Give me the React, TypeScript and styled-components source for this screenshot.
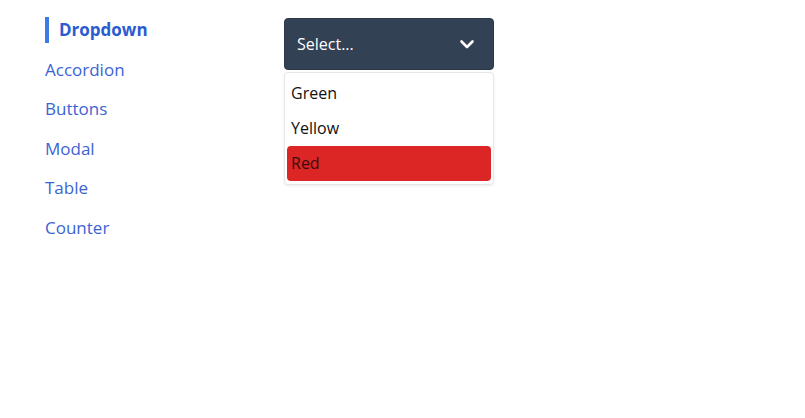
import React, { useState } from "react";
import styled, { createGlobalStyle } from "styled-components";

const GlobalStyle = createGlobalStyle`
  body {
    margin: 0;
    background: #ffffff;
    font-family: "Open Sans", "Noto Sans", sans-serif;
  }
`;

const Page = styled.div`
  display: flex;
  align-items: flex-start;
  padding: 17px 0 0 45px;
`;

const Nav = styled.nav`
  display: flex;
  flex-direction: column;
  width: 239px;
`;

const NavItem = styled.a<{ $active?: boolean }>`
  display: block;
  height: 39.5px;
  line-height: 26px;
  font-size: 17px;
  color: #3b63d4;
  text-decoration: none;
  cursor: pointer;
  font-weight: ${(p) => (p.$active ? 700 : 400)};
  ${(p) =>
    p.$active &&
    `
    border-left: 4px solid #3b7be8;
    padding-left: 10px;
    height: 26px;
    margin-bottom: 13.5px;
    color: #2b5bd1;
  `}
`;

const Dropdown = styled.div`
  display: flex;
  flex-direction: column;
  width: 210px;
  gap: 2px;
  margin-top: 1px;
`;

const Trigger = styled.button`
  display: flex;
  align-items: center;
  justify-content: space-between;
  height: 52px;
  padding: 0 18px 0 12px;
  background: #334155;
  color: #ffffff;
  border: 1px solid #2c3849;
  border-radius: 4px;
  font-family: inherit;
  font-size: 16px;
  cursor: pointer;
`;

const Menu = styled.ul`
  list-style: none;
  margin: 0;
  padding: 3px 2px;
  background: #ffffff;
  border: 1px solid #e5e7eb;
  border-radius: 4px;
  box-shadow: 0 1px 3px rgba(0, 0, 0, 0.08);
`;

const Option = styled.li<{ $selected?: boolean }>`
  height: 35px;
  line-height: 35px;
  padding: 0 4px;
  font-size: 16px;
  color: ${(p) => (p.$selected ? "#3a0b0b" : "#111111")};
  background: ${(p) => (p.$selected ? "#dc2626" : "transparent")};
  border-radius: 4px;
  cursor: pointer;
`;

const Chevron = () => (
  <svg width="16" height="16" viewBox="0 0 16 16" fill="none">
    <path d="M2.5 5.5 L8 11 L13.5 5.5" stroke="#fff" strokeWidth="2.6" strokeLinecap="round" strokeLinejoin="round" />
  </svg>
);

const links = ["Dropdown", "Accordion", "Buttons", "Modal", "Table", "Counter"];
const colors = ["Green", "Yellow", "Red"];

export default function App() {
  const [selected, setSelected] = useState("Red");
  return (
    <>
      <GlobalStyle />
      <Page>
        <Nav>
          {links.map((l) => (
            <NavItem key={l} $active={l === "Dropdown"}>
              {l}
            </NavItem>
          ))}
        </Nav>
        <Dropdown>
          <Trigger>
            <span>Select...</span>
            <Chevron />
          </Trigger>
          <Menu>
            {colors.map((c) => (
              <Option key={c} $selected={c === selected} onClick={() => setSelected(c)}>
                {c}
              </Option>
            ))}
          </Menu>
        </Dropdown>
      </Page>
    </>
  );
}
